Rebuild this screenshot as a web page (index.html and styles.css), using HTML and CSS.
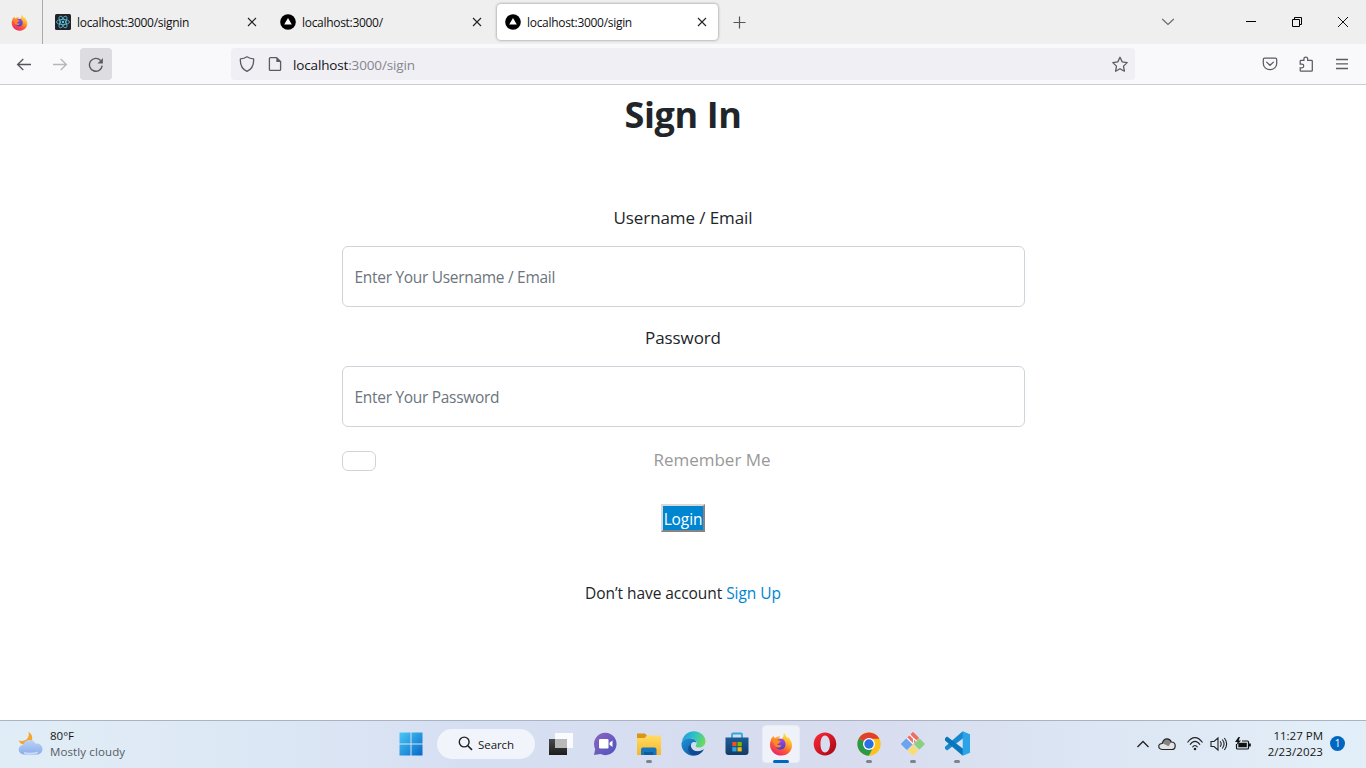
FILE: index.html
```html
<!DOCTYPE html>
<html lang="en">
<head>
<meta charset="utf-8">
<title>Sign In</title>
<link rel="stylesheet" href="styles.css">
</head>
<body>
<svg class="defs" width="0" height="0" aria-hidden="true">
  <defs>
    <linearGradient id="flame" x1=".8" y1="0" x2=".25" y2="1"><stop offset="0" stop-color="#fff04a"/><stop offset=".35" stop-color="#ffb02e"/><stop offset=".65" stop-color="#ff5a35"/><stop offset="1" stop-color="#e91e6b"/></linearGradient>
    <linearGradient id="globe" x1="0" y1="0" x2="0" y2="1"><stop offset="0" stop-color="#a14be0"/><stop offset="1" stop-color="#4b3fc4"/></linearGradient>
    <linearGradient id="win" x1="0" y1="0" x2="1" y2="1"><stop offset="0" stop-color="#4cc8f5"/><stop offset="1" stop-color="#0568c9"/></linearGradient>
    <linearGradient id="chat" x1="0" y1="0" x2="1" y2="1"><stop offset="0" stop-color="#8f63bd"/><stop offset="1" stop-color="#4b55c0"/></linearGradient>
    <linearGradient id="folder" x1="0" y1="0" x2="0" y2="1"><stop offset="0" stop-color="#ffdc63"/><stop offset="1" stop-color="#f6b62b"/></linearGradient>
    <linearGradient id="edgeTop" x1="0" y1=".3" x2="1" y2=".6"><stop offset="0" stop-color="#1f9ddd"/><stop offset=".5" stop-color="#2fc4c4"/><stop offset="1" stop-color="#6fdc55"/></linearGradient>
    <linearGradient id="edgeLow" x1="0" y1="0" x2="1" y2="1"><stop offset="0" stop-color="#1f95dd"/><stop offset="1" stop-color="#0c4a93"/></linearGradient>
    <linearGradient id="store" x1="0" y1="0" x2="0" y2="1"><stop offset="0" stop-color="#1c5d96"/><stop offset="1" stop-color="#123c68"/></linearGradient>
    <linearGradient id="opera" x1="0" y1="0" x2="1" y2="1"><stop offset="0" stop-color="#ff2a3c"/><stop offset="1" stop-color="#a3060f"/></linearGradient>
    <linearGradient id="cloud" x1="0" y1="0" x2="0" y2="1"><stop offset="0" stop-color="#bdd3f7"/><stop offset="1" stop-color="#8badea"/></linearGradient>
    <linearGradient id="dark" x1="0" y1="0" x2="0" y2="1"><stop offset="0" stop-color="#4a4a4a"/><stop offset="1" stop-color="#1d1d1d"/></linearGradient>
    <symbol id="firefox" viewBox="0 0 24 24">
      <path d="M2.400 6.200 4.600 4l1.200 2.200 2.300-1.400 3.100-.6-1.100 2.400 2.400.5 1.800-2.300L15 .8l3.200 4.900 1.700-.3 2.300 4c2.900 7.100-2 13.900-9.400 14.200C4.800 23.700.3 17.500 1.100 11Z" fill="url(#flame)"/>
      <path d="M7.500 8.500c2.100-2.300 6.100-2.300 8 .2 2.200 2.900 1 8.600-3.500 8.800-3.500.1-5.700-2-5.500-4.500l3.500-1.500.5-1.500Z" fill="url(#globe)"/>
      <path d="M3 8.500c1.400-2 4.600-2.600 6-.5l3 1.200-2.100 1.800-2 .5c.4 2 2.700 2.200 4.600 1.400-.8 2.800-3.900 3.500-6 1.700C4.900 12.500 4.900 10 3 8.500Z" fill="#ff8a2b"/>
    </symbol>
    <symbol id="next" viewBox="0 0 16 16"><circle cx="8" cy="8" r="7.800" fill="#000"/><path d="m8 4 3.800 6.500H4.200Z" fill="#fff"/></symbol>
    <symbol id="x" viewBox="0 0 16 16"><path d="m4 4 8 8m0-8-8 8" fill="none" stroke="#222" stroke-width="1.100"/></symbol>
  </defs>
</svg>

<header class="tabs">
  <div class="view"><svg width="17" height="17"><use href="#firefox"/></svg></div>
  <div class="tab">
    <svg width="16" height="16" viewBox="0 0 16 16"><rect width="16" height="16" rx="1.500" fill="#20232a"/><g fill="none" stroke="#61c4df" stroke-width=".8"><ellipse cx="8" cy="8" rx="6.500" ry="2.600"/><ellipse cx="8" cy="8" rx="6.500" ry="2.600" transform="rotate(60 8 8)"/><ellipse cx="8" cy="8" rx="6.500" ry="2.600" transform="rotate(120 8 8)"/></g><circle cx="8" cy="8" r="1.200" fill="#61c4df"/></svg>
    <span class="tab-title">localhost:3000/signin</span>
    <svg width="16" height="16"><use href="#x"/></svg>
  </div>
  <div class="tab">
    <svg width="16" height="16"><use href="#next"/></svg>
    <span class="tab-title">localhost:3000/</span>
    <svg width="16" height="16"><use href="#x"/></svg>
  </div>
  <div class="tab active">
    <svg width="16" height="16"><use href="#next"/></svg>
    <span class="tab-title">localhost:3000/sigin</span>
    <svg width="16" height="16"><use href="#x"/></svg>
  </div>
  <svg class="plus" width="14" height="14" viewBox="0 0 14 14"><path d="M7.500 1.500v12M1.500 7.500h12" stroke="#55555c" stroke-width="1.200"/></svg>
  <div class="window">
    <svg class="list" width="20" height="20" viewBox="0 0 20 20"><path d="m4.200 7 5.800 5.500L15.800 7" fill="none" stroke="#6a6a70" stroke-width="1.200"/></svg>
    <span><svg width="12" height="12" viewBox="0 0 12 12"><path d="M1 5.500h10" stroke="#000"/></svg></span>
    <span><svg width="12" height="12" viewBox="0 0 12 12"><path d="M1.500 3.500h7v7h-7zM3.500 3.500v-2h7v7h-2" fill="none" stroke="#000"/></svg></span>
    <span><svg width="12" height="12" viewBox="0 0 12 12"><path d="m1 1 10 10M11 1 1 11" stroke="#111"/></svg></span>
  </div>
</header>

<nav class="toolbar">
  <span class="tool"><svg width="16" height="16" viewBox="0 0 16 16"><path d="M15 8.500H1.500M7.300 3 1.600 8.500l5.700 5.500" fill="none" stroke="#55555d" stroke-width="1.300"/></svg></span>
  <span class="tool"><svg width="16" height="16" viewBox="0 0 16 16"><path d="M1 8.500h13.500M8.700 3l5.700 5.500L8.700 14" fill="none" stroke="#b6b6bb" stroke-width="1.300"/></svg></span>
  <span class="tool pressed"><svg width="16" height="16" viewBox="0 0 16 16"><path d="M14.200 9.600A6.400 6.400 0 1 1 12.600 4.500" fill="none" stroke="#5b5b64" stroke-width="1.400"/><path d="M14.900 2v5.400H9.500Z" fill="#5b5b64"/></svg></span>
  <div class="address">
    <svg width="16" height="16" viewBox="0 0 16 16"><path d="M8 .8c1.900 1.300 4.100 2 6.600 2.100C15 8.400 12.600 13.200 8 15.400 3.400 13.200 1 8.400 1.400 2.900 3.900 2.800 6.100 2.100 8 .8Z" fill="none" stroke="#5b5b64" stroke-width="1.300" stroke-linejoin="round"/></svg>
    <svg class="page" width="16" height="16" viewBox="0 0 16 16"><path d="M9.600 1.600H3.400q-1 0-1 1v10.800q0 1 1 1h9.200q1 0 1-1V5.600Z" fill="none" stroke="#5b5b64" stroke-width="1.300"/><path d="M9.300 1.400v4.500h4.600Z" fill="#5b5b64"/></svg>
    <span class="url">localhost<span>:3000/sigin</span></span>
    <svg class="star" width="17" height="17" viewBox="0 0 17 17"><path d="m9 1.300 2.200 4.600 5 .7-3.700 3.500.9 5.100L9 12.700l-4.400 2.500.9-5.100-3.700-3.500 5-.7Z" fill="none" stroke="#5b5b64" stroke-width="1.300" stroke-linejoin="round"/></svg>
  </div>
  <div class="actions">
    <span class="tool"><svg width="16" height="16" viewBox="0 0 16 16"><path d="M2.500 2.200h11q1.200 0 1.200 1.200v4A6.700 6.300 0 0 1 1.300 7.400v-4q0-1.200 1.200-1.200ZM4.600 6.100 8 9.300l3.400-3.200" fill="none" stroke="#5b5b64" stroke-width="1.250" stroke-linecap="round"/></svg></span>
    <span class="tool"><svg width="16" height="16" viewBox="0 0 16 16"><path d="M2.200 8.100V5.200q0-.8.8-.8h2.900V2.900a1.900 1.900 0 0 1 3.800 0v1.500h3.800q.8 0 .8.800v9.200q0 .8-.8.800H3q-.8 0-.8-.8v-2.600h1.700a1.800 1.800 0 0 0 0-3.700Z" fill="none" stroke="#5b5b64" stroke-width="1.250"/></svg></span>
    <span class="tool"><svg width="16" height="16" viewBox="0 0 16 16"><path d="M2 3.500h12M2 7.800h12M2 12.500h12" stroke="#5b5b64" stroke-width="1.300"/></svg></span>
  </div>
</nav>

<main>
  <h1>Sign In</h1>
  <form>
    <label for="user">Username / Email</label>
    <input class="field user" id="user" type="text" placeholder="Enter Your Username / Email">
    <label for="pass">Password</label>
    <input class="field" id="pass" type="text" placeholder="Enter Your Password">
    <div class="remember"><i class="check"></i><span>Remember Me</span></div>
    <button type="button">Login</button>
  </form>
  <p class="signup">Don’t have account <a>Sign Up</a></p>
</main>

<footer class="taskbar">
  <div class="weather">
    <svg width="26" height="26" viewBox="0 0 26 26"><path d="M10.500.8c1 3.900-.5 7.200-3.500 8.500-2.200 1-4.200.8-6.200.2 1.300 4.600 7.500 5.500 11.200 2.700 3.600-2.700 2.900-8.800-1.500-11.400Z" fill="#f5a72d"/><path d="M5.600 23.400a4.800 4.800 0 0 1-.2-9.600 6.500 6.500 0 0 1 12-1.300c4.200-.6 7.100 2.200 7.100 5.400 0 3-2.300 5.500-5.500 5.500Z" fill="url(#cloud)"/><path d="M6 21.800c4 1 9 .7 14-.3" stroke="#cbdcfa" stroke-width="1.500" fill="none"/></svg>
    <div><span class="temp">80°F</span><span class="sky">Mostly cloudy</span></div>
  </div>
  <div class="apps">
    <span class="app"><svg width="24" height="24" viewBox="0 0 24 24"><path d="M.5.500h11v11H.5zM12.500.500h11v11h-11zM.5 12.500h11v11H.5zM12.500 12.500h11v11h-11z" fill="url(#win)"/></svg></span>
    <span class="search"><svg width="15" height="15" viewBox="0 0 15 15"><circle cx="6.200" cy="6" r="4.900" fill="none" stroke="#222" stroke-width="1.400"/><path d="m9.800 9.700 4.200 4.200" stroke="#222" stroke-width="1.600"/></svg><span>Search</span></span>
    <span class="app"><svg width="24" height="24" viewBox="0 0 24 24"><path d="M0 7h18v16H0z" fill="url(#dark)"/><path d="M6 1h18v15H6z" fill="#fff" fill-opacity=".88"/><path d="M6 7h12v9H6z" fill="#b9b9b9"/></svg></span>
    <span class="app"><svg width="24" height="24" viewBox="0 0 24 24"><path d="M12.500.8a11.200 11.200 0 1 1-5 21.300L1 23l1.200-6A11.200 11.200 0 0 1 12.500.8Z" fill="url(#chat)"/><rect x="6" y="7" width="9.500" height="9.500" rx="1.300" fill="#fff"/><path d="m16.500 10.800 3-2.300V15l-3-2.300Z" fill="#fff"/></svg></span>
    <span class="app run"><svg width="24" height="24" viewBox="0 0 24 24"><path d="M0 1.500h8L10.200 4 8 7H0Z" fill="#d99513"/><path d="M0 6h7.500L10 3.600h13q1 0 1 1V23H0Z" fill="url(#folder)"/><path d="M4 23v-5.500q0-2 2-2h11.500q2 0 2 2V23Z" fill="#1876bd"/><path d="M7 20h9.500v3H7Z" fill="#0c5d9e"/></svg></span>
    <span class="app"><svg width="25" height="25" viewBox="0 0 24 24"><path d="M.8 10C2.500 3.500 7.200.2 12.500.3 19 .5 23.700 5.200 23.500 10c-.2 4.200-3.300 5.900-6.700 5.800-2.600 0-3.200-1.200-2.300-2.300C16.200 11 14 7.400 9.500 7 5.500 6.600 2.500 8 .8 10Z" fill="url(#edgeTop)"/><path d="M.5 12C1 8.500 5 6.800 8.900 7c3.700.2 5.900 2.300 5.900 4.300-1.500-1.200-4-.9-5 1.200-1.300 3.400 2.100 7 6.100 7 2.400.1 4.400-.7 6-1.900-2 4-5.700 6.200-9.900 6.100C5.500 23.600.1 18.400.5 12Z" fill="url(#edgeLow)"/><path d="M9.800 12.500c-1.600 4 2.500 8 7 7 2.100-.2 3.600-1 5.100-1.900-2.100 4.100-6.700 6.200-10.500 5.500C5.500 20.500 5.800 14.500 9.800 12.500Z" fill="#123f83" fill-opacity=".65"/></svg></span>
    <span class="app"><svg width="24" height="24" viewBox="0 0 24 24"><path d="M7 6V2.500q0-1 1-1h8q1 0 1 1V6" fill="none" stroke="#31a6df" stroke-width="1.800"/><path d="M.5 5.500h23V20q0 3-3 3h-17q-3 0-3-3Z" fill="url(#store)"/><path d="M7.300 10h4.200v4.200H7.300z" fill="#f25022"/><path d="M12.500 10h4.200v4.200h-4.200z" fill="#7fba00"/><path d="M7.300 15.200h4.200v4.200H7.300z" fill="#27a9e8"/><path d="M12.500 15.200h4.200v4.200h-4.200z" fill="#ffb900"/></svg></span>
    <span class="app current"><svg width="24" height="24"><use href="#firefox"/></svg></span>
    <span class="app"><svg width="24" height="24" viewBox="0 0 24 24"><path fill-rule="evenodd" d="M12 .5c6.300 0 11.300 5 11.300 11.500S18.300 23.500 12 23.500.7 18.500.7 12 5.700.5 12 .5Zm0 3c-3 0-4.500 4-4.500 8.500s1.500 8.500 4.500 8.500 5-4 5-8.500-2-8.500-5-8.500Z" fill="url(#opera)"/></svg></span>
    <span class="app run"><svg width="24" height="24" viewBox="0 0 24 24"><circle cx="12" cy="12" r="11.700" fill="#fcc21b"/><path d="M12 12 1.900 6.200A11.700 11.700 0 0 0 11.800 23.700l4.800-9Z" fill="#299a4b"/><path d="M12 12 1.900 6.200A11.700 11.700 0 0 1 22.100 6.200l.2.500H12Z" fill="#df3e31"/><circle cx="12" cy="12" r="6" fill="#fff"/><circle cx="12" cy="12" r="4.700" fill="#2a70e0"/></svg></span>
    <span class="app run"><svg width="24" height="24" viewBox="0 0 24 24"><g transform="rotate(45 12 12)"><rect x="3.500" y="3.500" width="8" height="8" rx="1" fill="#ee6d66"/><rect x="12.500" y="3.500" width="8" height="8" rx="1" fill="#8bd080"/><rect x="12.500" y="12.500" width="8" height="8" rx="1" fill="#f8dc77"/><rect x="3.500" y="12.500" width="8" height="8" rx="1" fill="#6ca4ef"/></g><path d="M12 0 18 6l-6 6-6-6Z" fill="#ee6d66"/><path d="M0 12 6 6l6 6-6 6Z" fill="#6ca4ef"/><path d="m8.500 2.500 4 4v5m0-5 3 2.500M6 6l6 6" fill="none" stroke="#fff" stroke-width="1.100"/></svg></span>
    <span class="app run"><svg width="25" height="25" viewBox="0 0 24 24"><path d="M17 .3 0 15v2l2 1.700L18 6.500Z" fill="#1688cf"/><path d="M17 23.700 0 9V7l2-1.700L18 17.500Z" fill="#0876b9"/><path d="M17 .3 24 3.200v17.600l-7 2.900Z" fill="#2ba3e8"/></svg></span>
  </div>
  <div class="tray">
    <svg class="up" width="14" height="14" viewBox="0 0 14 14"><path d="m1.500 10 5.500-5.500L12.500 10" fill="none" stroke="#222" stroke-width="1.300"/></svg>
    <svg class="onedrive" width="18" height="14" viewBox="0 0 18 14"><path d="M4.700 12.500C2.200 12.500.8 11.200.8 9.500c0-1.900 1.300-3 3.300-3C5 3.500 7 1.800 9 1.800c2.200 0 3.600 1.200 4.300 3.200 2.300 0 3.900 1.700 3.900 3.900 0 2-1.500 3.600-3.700 3.600Z" fill="#e4e4e4"/><path d="M1.500 8.500C3 6.200 5 6.200 7 7.500l3.500 1.800L13.300 5C12 .8 5.500.500 4.200 6.500Z" fill="#858585"/><path d="M4.700 12.500C2.200 12.500.8 11.200.8 9.500c0-1.900 1.300-3 3.300-3C5 3.500 7 1.800 9 1.800c2.200 0 3.600 1.200 4.300 3.200 2.300 0 3.900 1.700 3.900 3.900 0 2-1.500 3.600-3.700 3.600Z" fill="none" stroke="#252525" stroke-width="1.200"/></svg>
    <svg class="wifi" width="18" height="16" viewBox="0 0 18 16"><path d="M1.500 6.500C6-.1 12 .1 16.500 6.500M4 8.800c3-4.600 7-4.600 10 0M6.400 11.300c1.700-2.500 3.500-2.500 5.200 0" fill="none" stroke="#222" stroke-width="1.100"/><circle cx="9" cy="13" r="1.300" fill="#222"/></svg>
    <svg class="sound" width="18" height="16" viewBox="0 0 18 16"><path d="M1 5.500h3L8 2v12l-4-3.500H1ZM10.200 5.200q2 2.800 0 5.600M12.300 3.500q3.500 4.500 0 9M14.400 2q4.500 6 0 12" fill="none" stroke="#222" stroke-width="1.100"/></svg>
    <svg class="battery" width="18" height="16" viewBox="0 0 18 16"><path d="M2.500 8v4q0 1 1 1h10q1 0 1-1V6q0-1-1-1H8" fill="none" stroke="#111" stroke-width="1.200"/><path d="M4.300 6.700h8.500v4.500H4.300zM15 7.500h1.800v3H15zM4.500 1 1 6h2.500L2.500 9 7 4.500H4.700L6 1Z" fill="#111"/></svg>
    <div class="clock"><span class="time">11:27 PM</span><span class="date">2/23/2023</span></div>
    <span class="badge">1</span>
  </div>
</footer>
</body>
</html>
```

FILE: styles.css
```css
* { box-sizing: border-box; }
body { margin: 0; width: 1366px; height: 768px; overflow: hidden; display: flex; flex-direction: column; background: #fff; color: #212529; font-family: "Open Sans", "Noto Sans", sans-serif; }
svg { display: block; flex: none; }
.defs { position: absolute; }

.tabs { height: 44px; flex: none; display: flex; align-items: center; gap: 4px; background: #efefef; font-size: 12px; color: #111; }
.view { width: 43px; height: 44px; padding: 0 0 0 11px; display: flex; align-items: center; border-right: 1px solid #aaa; }
.tab { width: 221px; height: 36px; padding: 0 8px; display: flex; align-items: center; gap: 6px; border-radius: 4px; }
.tab.active { background: #fff; box-shadow: 0 0 3px rgba(0,0,0,.45); }
.tab-title { flex: 1; padding-top: 1px; white-space: nowrap; letter-spacing: -.3px; }
.plus { margin-left: 10px; }
.window { margin-left: auto; display: flex; align-items: center; }
.window span { width: 46px; display: flex; justify-content: center; }
.list { margin-right: 50px; }

.toolbar { height: 41px; flex: none; display: flex; align-items: center; gap: 4px; padding: 0 8px; background: #f9f9fb; border-bottom: 1px solid #ccccd0; }
.tool { width: 32px; height: 32px; display: flex; align-items: center; justify-content: center; border-radius: 4px; }
.pressed { background: #dcdce1; }
.address { width: 904px; height: 32px; margin-left: 115px; padding: 0 7px 0 8px; display: flex; align-items: center; background: #f0eff4; border-radius: 4px; font-size: 13.500px; }
.page { margin: 0 10px 0 12px; }
.url { padding-top: 1px; letter-spacing: -.15px; color: #15141a; }
.url span { color: #86868d; }
.star { margin-left: auto; }
.actions { margin-left: auto; display: flex; gap: 4px; }

main { flex: 1; display: flex; flex-direction: column; align-items: center; }
h1 { margin: 8px 0 0; font-size: 36px; line-height: 43px; letter-spacing: -.4px; }
form { width: 683px; margin-top: 67px; display: flex; flex-direction: column; align-items: center; }
label { height: 27px; margin-bottom: 16px; padding-top: 1px; font-size: 17px; line-height: 27px; letter-spacing: -.1px; }
.field { width: 683px; height: 61px; margin: 0 0 17px; padding: 1px 12px 0; border: 1px solid #ced4da; border-radius: 6px; font: 15.500px "Open Sans", sans-serif; letter-spacing: -.3px; }
.field.user { margin-bottom: 16px; }
.field::placeholder { color: #6c757d; opacity: 1; }
.remember { width: 683px; height: 27px; margin-top: 2px; display: flex; align-items: center; gap: 24px; color: #999; font-size: 17px; }
.remember span { flex: 1; padding-bottom: 1px; text-align: center; }
.check { width: 34px; height: 20px; margin-top: 3px; border: 1px solid #ced4da; border-radius: 6px; }
button { width: 44px; height: 28px; margin-top: 31px; padding: 2px 0 0; border: 2px outset #d8d8d8; background: #0085d1; color: #fff; font: 15.500px/22px "Open Sans", sans-serif; letter-spacing: -.1px; white-space: nowrap; display: flex; justify-content: center; }
.signup { margin: 49px 0 0; font-size: 15.500px; line-height: 24px; letter-spacing: -.06px; }
.signup a { color: #0085d1; }

.taskbar { height: 48px; flex: none; display: flex; align-items: center; padding-bottom: 2px; border-top: 1px solid #a9b3c4; background: linear-gradient(90deg, #e1edf6 0%, #dce7f5 20%, #d6dff2 35%, #d7dcee 62%, #dce6f4 80%, #e3eff8 100%); color: #151515; font-size: 11.500px; }
.weather { width: 389px; padding-left: 18px; display: flex; align-items: center; gap: 6px; }
.weather div { display: flex; flex-direction: column; line-height: 16px; }
.sky { color: #555b64; letter-spacing: .12px; }
.apps { display: flex; align-items: center; }
.app { position: relative; width: 44px; height: 45px; display: flex; align-items: center; justify-content: center; }
.run::after { content: ""; position: absolute; left: 19px; bottom: 3px; width: 6px; height: 3px; border-radius: 2px; background: #7e848e; }
.current { width: 38px; height: 38px; margin: 0 3px; background: #f0f2fa; border: 1px solid #e8ebf5; border-radius: 4px; }
.current::after { content: ""; position: absolute; left: 10px; bottom: -1px; width: 16px; height: 3px; border-radius: 2px; background: #0067c0; }
.search { width: 98px; height: 30px; margin: 0 4px; display: flex; align-items: center; justify-content: center; gap: 5px; border-radius: 15px; background: #f1f4fb; font-size: 11.500px; letter-spacing: -.1px; }
.search span { padding-top: 1px; }
.tray { margin-left: auto; padding-right: 21px; display: flex; align-items: center; }
.onedrive { margin-left: 8px; }
.wifi { margin-left: 10px; }
.sound { margin-left: 6px; }
.battery { margin-left: 6px; }
.clock { width: 71px; display: flex; flex-direction: column; align-items: flex-end; line-height: 16px; }
.date { letter-spacing: .1px; }
.badge { width: 15px; height: 15px; margin-left: 7px; border-radius: 50%; background: #0067c0; color: #fff; font-size: 10px; line-height: 15px; text-align: center; }
```
